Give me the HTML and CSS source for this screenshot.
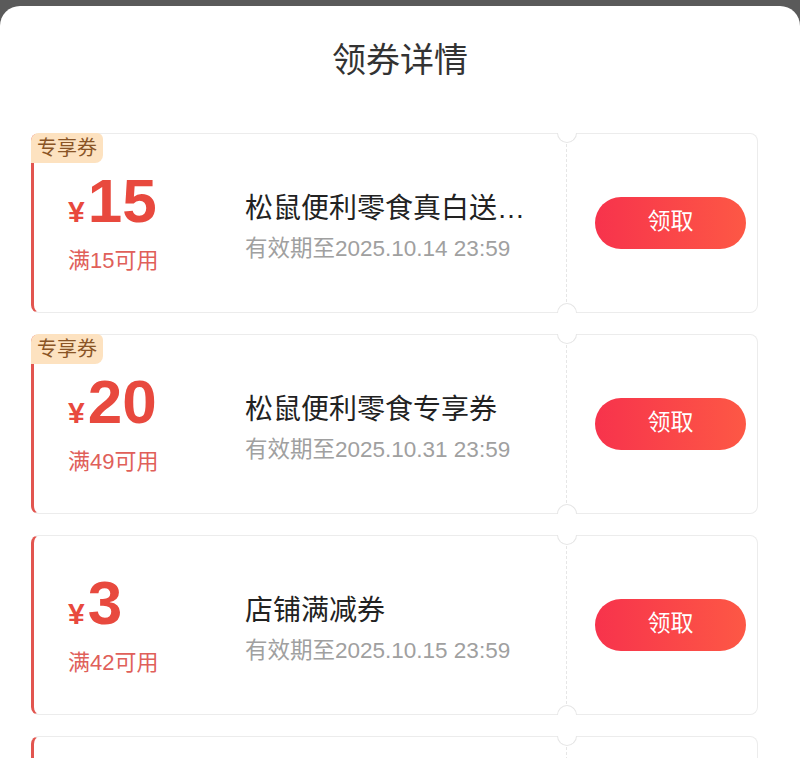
FILE: index.html
```html
<!DOCTYPE html>
<html lang="zh-CN">
  <head>
    <meta charset="UTF-8" />
    <title>领券详情</title>
    <link rel="stylesheet" href="styles.css">
  </head>
  <body>
    <div class="sheet">
      <h2 class="title">领券详情</h2>

      <div class="coupon-list">
        <!-- coupon 1 -->
        <div class="coupon">
          <span class="tag">专享券</span>
          <div class="coupon-main">
            <div class="price">
              <div class="amount"><span class="yen">¥</span>15</div>
              <div class="limit">满15可用</div>
            </div>
            <div class="info">
              <div class="name">松鼠便利零食真白送券专享</div>
              <div class="expire">有效期至2025.10.14 23:59</div>
            </div>
          </div>
          <div class="coupon-side">
            <button class="btn-get">领取</button>
          </div>
        </div>

        <!-- coupon 2 -->
        <div class="coupon">
          <span class="tag">专享券</span>
          <div class="coupon-main">
            <div class="price">
              <div class="amount"><span class="yen">¥</span>20</div>
              <div class="limit">满49可用</div>
            </div>
            <div class="info">
              <div class="name">松鼠便利零食专享券</div>
              <div class="expire">有效期至2025.10.31 23:59</div>
            </div>
          </div>
          <div class="coupon-side">
            <button class="btn-get">领取</button>
          </div>
        </div>

        <!-- coupon 3 -->
        <div class="coupon">
          <div class="coupon-main">
            <div class="price">
              <div class="amount"><span class="yen">¥</span>3</div>
              <div class="limit">满42可用</div>
            </div>
            <div class="info">
              <div class="name">店铺满减券</div>
              <div class="expire">有效期至2025.10.15 23:59</div>
            </div>
          </div>
          <div class="coupon-side">
            <button class="btn-get">领取</button>
          </div>
        </div>

        <!-- coupon 4 (runs past the bottom of the sheet) -->
        <div class="coupon">
          <div class="coupon-main"></div>
          <div class="coupon-side"></div>
        </div>
      </div>
    </div>
  </body>
</html>
```

FILE: styles.css
```css
body {
  margin: 0;
  background: #5a5a5a;
  font-family: "Liberation Sans", "Noto Sans CJK SC", sans-serif;
}

.sheet {
  margin-top: 6px;
  background: #fff;
  border-radius: 20px 20px 0 0;
  padding-top: 30px;
  min-height: 800px;
}

.title {
  margin: 0;
  text-align: center;
  font-size: 34px;
  line-height: 48px;
  font-weight: normal;
  color: #333;
}

.coupon-list {
  margin: 49px 42px 0 31px;
}

.coupon {
  position: relative;
  display: flex;
  height: 180px;
  box-sizing: border-box;
  margin-bottom: 21px;
  border: 1px solid #ececec;
  border-left: 3px solid #e2554f;
  border-radius: 8px;
  background: #fff;
}

.tag {
  position: absolute;
  left: -3px;
  top: -1px;
  padding: 0 6px;
  height: 30px;
  line-height: 30px;
  font-size: 20px;
  color: #8a5526;
  background: #fde2c0;
  border-radius: 8px 6px 8px 0;
}

.coupon-main {
  flex: 1;
  display: flex;
  align-items: center;
  padding-left: 34px;
  padding-top: 2px;
}

.price {
  width: 177px;
}

.amount {
  font-size: 62px;
  font-weight: bold;
  line-height: 52px;
  color: #e8493e;
}

.yen {
  font-size: 30px;
  margin-right: 3px;
}

.limit {
  margin-top: 10px;
  font-size: 22px;
  line-height: 25px;
  color: #e0605a;
}

.info {
  width: 291px;
}

.name {
  font-size: 28px;
  color: #222;
  white-space: nowrap;
  overflow: hidden;
  text-overflow: ellipsis;
}

.expire {
  margin-top: 4px;
  font-size: 22.5px;
  color: #a0a0a0;
}

.coupon-side {
  position: relative;
  width: 191px;
  display: flex;
  align-items: center;
  justify-content: flex-end;
  padding-right: 11px;
  box-sizing: border-box;
  border-left: 1px dashed #e6e6e6;
}

/* half-circle notches on the perforation */
.coupon-side::before,
.coupon-side::after {
  content: "";
  position: absolute;
  left: -10px;
  width: 18px;
  height: 9px;
  background: #fff;
  border: 1px solid #e6e6e6;
}

.coupon-side::before {
  top: -1px;
  border-top: none;
  border-radius: 0 0 10px 10px;
}

.coupon-side::after {
  bottom: -1px;
  border-bottom: none;
  border-radius: 10px 10px 0 0;
}

.btn-get {
  width: 151px;
  height: 52px;
  border: none;
  border-radius: 26px;
  background: linear-gradient(90deg, #f7334c, #fd5845);
  color: #fff;
  font-family: inherit;
  font-size: 23px;
  line-height: 1;
  padding: 0 0 4px;
  cursor: pointer;
}
```
